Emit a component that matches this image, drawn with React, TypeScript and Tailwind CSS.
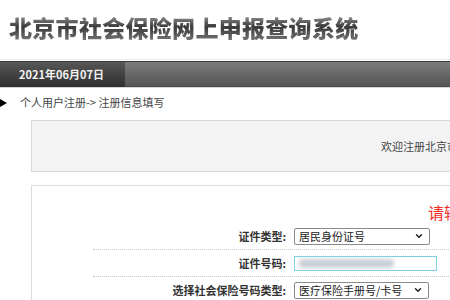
import { ChevronDown } from "lucide-react";

const font = "font-['Microsoft_YaHei','Noto_Sans_CJK_SC',sans-serif]";

function FakeSelect({ text, width }: { text: string; width: string }) {
  return (
    <div
      className={`${width} h-[17px] flex items-center justify-between pl-[4px] pr-[5px] border border-[#8a8a8a] rounded-[2px] bg-white text-[11px] leading-none text-[#222]`}
    >
      <span>{text}</span>
      <ChevronDown size={10} strokeWidth={3.5} className="text-[#222]" />
    </div>
  );
}

function FormRow({ label, children }: { label: string; children: React.ReactNode }) {
  return (
    <div className="flex items-center h-[27px] border-b border-dotted border-[#c8c8c8]">
      <div className="w-[194px] text-right text-[11px] font-bold text-[#333] pr-px">{label}</div>
      <div className="ml-[7px] flex items-center">{children}</div>
    </div>
  );
}

export default function App() {
  return (
    <div className={`w-[450px] h-[300px] overflow-hidden bg-white ${font}`}>
      <div className="w-[1000px]">
        {/* 标题 */}
        <div className="h-[59px] pt-[13px] pl-[9px]">
          <h1 className="text-[23px] leading-[28px] font-black tracking-[0.3px] bg-linear-to-b from-[#aaa] via-[#3a3a3a] to-[#777] bg-clip-text text-transparent">
            北京市社会保险网上申报查询系统
          </h1>
        </div>
        <div className="h-px bg-[#ebebeb]" />
        <div className="h-px bg-white" />

        {/* 日期栏 */}
        <div className="flex h-[26px] border-t border-[#3a3a3a]">
          <div className="w-[125px] h-full flex items-center pl-[19px] bg-linear-to-b from-[#575757] to-[#2f2f2f] text-[11px] font-bold text-[#f2f2f2]">
            2021年06月07日
          </div>
          <div className="flex-1 h-full bg-linear-to-b from-[#7b7b7b] to-[#555] border-b border-[#4a4a4a]" />
        </div>
        <div className="h-px bg-[#d6d6d6]" />

        {/* 面包屑 */}
        <div className="mt-[6px] h-[16px] flex items-center">
          <div className="w-0 h-0 border-y-[4px] border-y-transparent border-l-[7px] border-l-black mt-[1px]" />
          <span className="ml-[13px] text-[11px] text-[#444]">个人用户注册-&gt; 注册信息填写</span>
        </div>

        {/* 欢迎 */}
        <div className="mt-[10px] ml-[31px] w-[940px] h-[52px] flex items-center bg-[#f3f3f3] border border-[#d9d9d9] pl-[349px] text-[11px] text-[#444]">
          欢迎注册北京市社会保险网上申报查询系统
        </div>

        {/* 表单 */}
        <div className="mt-[13px] ml-[31px] w-[940px] h-[200px] border border-[#dcdcdc] bg-white">
          <div className="pt-[15px] h-[37px] pl-[396px] text-[16px] leading-[22px] text-[#f02b1f]">
            请输入注册信息
          </div>
          <div className="ml-[61px] w-[760px]">
            <FormRow label="证件类型:">
              <FakeSelect text="居民身份证号" width="w-[136px]" />
            </FormRow>
            <FormRow label="证件号码:">
              <div className="w-[143px] h-[15px] border border-[#7fd0e2] bg-white flex items-center pl-[4px] overflow-hidden">
                <div className="w-[95px] h-[9px] bg-[#c9cfd6] blur-[2px] rounded-sm" />
              </div>
            </FormRow>
            <FormRow label="选择社会保险号码类型:">
              <FakeSelect text="医疗保险手册号/卡号" width="w-[135px]" />
            </FormRow>
          </div>
        </div>
      </div>
    </div>
  );
}
